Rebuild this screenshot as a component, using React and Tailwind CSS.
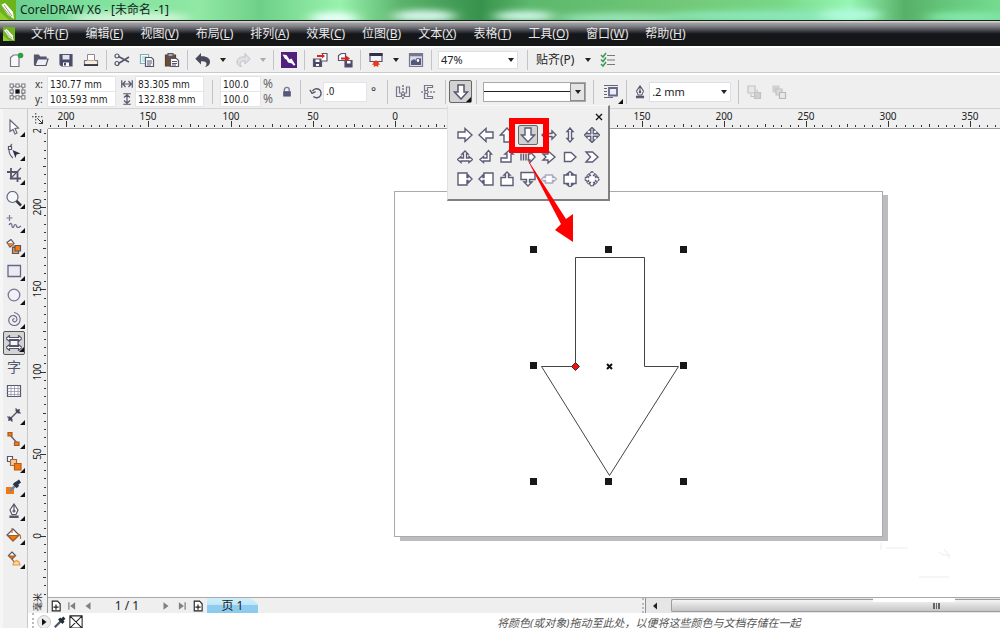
import React from 'react';

const Svg = ({ size = 'size-4', children, ...props }) => (
    <svg viewBox="0 0 16 16" fill="none" stroke="#55556b" strokeWidth="1.2" aria-hidden="true" className={`${size} shrink-0`} {...props}>
        {children}
    </svg>
);

const Logo = ({ className }) => (
    <svg viewBox="0 0 16 20" className={className} preserveAspectRatio="none" aria-hidden="true">
        <rect width="16" height="20" fill="#6db31c"/>
        <path d="M0 20V12l9 8z" fill="#8fcf2e"/>
        <path d="M1 5l4-2 8 9 1 7-6-4z" fill="#fff"/>
        <path d="M4 5l8 11M1 5l10 12" stroke="#7a8a50" strokeWidth="0.8"/>
    </svg>
);

const icons = {
    new: <><path d="M2.500 5.500l3-2.500h5.500v11.500h-8.500z" fill="#f8f8fb" stroke="#77778a"/><circle cx="12.500" cy="3.500" r="2.800" fill="#2fa03c" stroke="none"/></>,
    open: <><path d="M1.500 13V3h4l1.500 2h6v2" fill="#55556b"/><path d="M2 13.500L4.500 7H15l-2 6.500z" fill="#eef0f8"/></>,
    save: <><path d="M2 2.500h12v11.500H3.500L2 12.500z" fill="#484868"/><path d="M4.500 3h7v4.500h-7z" fill="#dfe4f0" stroke="none"/><path d="M5 10.500h6v3.500H5z" fill="#fff" stroke="none"/><path d="M6 11h2v2.500H6z" fill="#484868" stroke="none"/></>,
    print: <><path d="M4.500 8V2.500h7V8" fill="#fff" stroke="#8a8a96" strokeWidth="1"/><path d="M1.500 8.500h13v5h-13z" fill="#efeff4" stroke="#77778a"/><path d="M1 13h14" stroke="#33333f" strokeWidth="1.800"/><path d="M4 8.500h8" stroke="#e8b060"/></>,
    cut: <><path d="M4.500 4.500L15 10M4.500 11.500L15 5" strokeWidth="1.600"/><circle cx="3" cy="4" r="2"/><circle cx="3" cy="11.500" r="2"/></>,
    copy: <><path d="M1.500 2.500h8v9h-8z" fill="#fff" stroke="#8ba8b8"/><path d="M3 5h5M3 7h5M3 9h5" stroke="#8ccfc0"/><path d="M6.500 5.500h6l2 2v7h-8z" fill="#fff"/><path d="M8 9h5M8 11h5M8 13h4"/></>,
    paste: <><path d="M1.500 3h10v11h-10z" fill="#6d4c35" stroke="#5a4030"/><path d="M4 1.500h5v3H4z" fill="#a8a8b8"/><path d="M6.500 6.500h6l2 2v6h-8z" fill="#fff"/><path d="M8 9.500h5M8 11.500h5M8 13h4"/></>,
    undo: <path d="M6 1v3.200c5.500-.5 9 2 9 5.500 0 3.500-2.500 5-5 5 2.500-2 2.500-6-4-5.500v3.300L.3 6.700z" fill="#484a5c" stroke="none"/>,
    redo: <path d="M10 1.500v3.500c-5-.5-8 1.500-8 5 0 3 2.500 4.500 4.500 4.500-2-1.500-2.500-6 3.500-5.500v3L15.200 7z" fill="#e0e0e4" stroke="#b8b8c0" strokeWidth="0.800"/>,
    connect: <><path d="M0 0h16v16H0z" fill="#50207c" stroke="none"/><path d="M1.500 2.500l4 .5 3 4.500 2-1 4 6.500-2 .5-1.500-2-4-1-1.500-3-1.500-.5z" fill="#fff" stroke="none"/></>,
    import: <><path d="M1.500 7h8v7.500h-8z" fill="#484868"/><path d="M3.500 7.500h4v2.500h-4zM4 12h3v2H4z" fill="#fff" stroke="none"/><path d="M9.500 1.500h5.500V9H9.500" fill="#fff"/><path d="M5 5V3h5V1.500L13 4l-3 2.500V5z" fill="#d22" stroke="none"/></>,
    export: <><path d="M1.500 3.500l3-2h4v7h-7z" fill="#fff"/><path d="M8 8.500h7v6.500H8z" fill="#484868"/><path d="M10 9h3.500v2.500H10z" fill="#fff" stroke="none"/><path d="M4 5.500h5v-2l4 3-4 3v-2H4z" fill="#d22" stroke="none"/></>,
    publish: <><path d="M2 1.500h12v8H2z" fill="#f4f4fa"/><path d="M1.500 2.500h13" stroke="#30304a" strokeWidth="3"/><path d="M4.500 8.500l2 1.500L8 8l1.500 2 2-1.500-1 2.500 1.500 1.500-2 .5.500 2L8 14l-2.500 1 .5-2-2-.5L5.500 11z" fill="#e63a1a" stroke="none"/></>,
    launcher: <><path d="M1.500 1.500h13v13h-13z" fill="#d8dcec" stroke="#77778f"/><path d="M1.500 3h13" strokeWidth="2.500" stroke="#77778f"/><path d="M3 13V9l3-2 2 2 5-3v7z" fill="#55557a" stroke="none"/><circle cx="10" cy="8.500" r="2" fill="#fff"/></>,
    options: <><path d="M7 3.500h8M7 8h8M7 12.500h8" stroke="#77777f"/><path d="M1 3l2 2 3-4M1 7.500l2 2 3-4M1 12l2 2 3-4" stroke="#3d9a50" strokeWidth="1.500"/></>,
    rotate: <path d="M5 13.200A5.200 5.200 0 1 0 4 7M1 5.500l2.500 4L7.500 7.500" strokeWidth="1.600"/>,
    mirrorH: <><path d="M1.500 3v9.500h5V9h-2V3zM14.500 3v9.500h-5V9h2V3z" stroke="#77778a"/><path d="M8 1v15" strokeDasharray="2 1"/></>,
    mirrorV: <><path d="M4.500 1.500h8v2h-5v3h-3zM4.500 14.500h8v-2h-5v-3h-3z" stroke="#77778a"/><path d="M1 8h14" strokeDasharray="2 1"/></>,
    wrap: <><path d="M1 1.500h14M1 4.500h3M1 7.500h3M1 10.500h3M1 13.500h9" stroke="#66667a"/><path d="M6 4h8v7.500H6z" fill="#eceef6" strokeWidth="1.800" stroke="#66668a"/></>,
    pen: <><path d="M8 1l4 6-2 4.500H6L4 7zM8 2v5" fill="#fff"/><circle cx="8" cy="8" r="1"/><path d="M4 13h8v1.500H4z" fill="#55556b"/></>,
    front: <><path d="M2 2h7v7H2z" fill="#e8e8e8" stroke="#c2c2c2"/><path d="M8.500 8.500h6v6h-6z" fill="#d0d0d0" stroke="#c2c2c2"/><path d="M5 10v2.500h3M11 8V5.500" stroke="#c2c2c2"/></>,
    back: <><path d="M2 2h6v6H2z" fill="#d0d0d0" stroke="#d0d0d0"/><path d="M5 5h6v6H5z" fill="#dadada" stroke="#c2c2c2"/><path d="M8.500 8.500h6v6h-6z" fill="#e8e8e8" stroke="#b8b8b8"/></>,
    lock: <><path d="M4.500 7V5a3 3 0 0 1 6.500 0v2" stroke="#77779a" strokeWidth="1.800"/><path d="M3 7h10v7H3z" fill="#44446a" stroke="none"/><path d="M4 9.500h8M4 12h8" stroke="#8888a8" strokeWidth="0.800"/></>,
};

const tools = [
    ['选择', <path d="M4 1l8.500 8-3.500.5 2 4.500-2 1-2-4.500L4 12.500z" fill="#fff" stroke="#66667f"/>],
    ['形状', <><path d="M6 1C2 5 2 11 7 15" stroke="#66667f"/><path d="M2.500 3.500h3v3h-3z" fill="#fff"/><path d="M6.500 7l8 3.500-4 1-1 3.500z" fill="#30304a" stroke="none"/></>],
    ['裁剪', <><path d="M5 1v10.500h10M1 5h10.500v10" strokeWidth="1.800"/><path d="M4 12L15 1"/></>],
    ['缩放', <><circle cx="6.500" cy="6" r="5.500" fill="#f4f8fc" stroke="#66667f"/><path d="M10.500 10l4.500 4.500" strokeWidth="2.500" stroke="#33333f"/></>],
    ['手绘', <><path d="M3.500 0v6M.5 3h6" stroke="#7777a0"/><path d="M3 10c2-3 3-1 3 1s1.500 2 2 0 2-2 2.500 0 2 2 4.500 0" stroke="#66668a"/></>],
    ['智能填充', <><path d="M1 3.500l4-3 3 4-4 3.500z" fill="#fff"/><path d="M1.500 4H7L4 7.500z" fill="#e88030" stroke="none"/><path d="M6 6l3 3" stroke="#f08020" strokeWidth="2"/><path d="M6.500 8.500h6v6h-6z" fill="#f59a3a"/><path d="M9 6.500h5.500v5.500H9z" fill="#f07a12"/></>],
    ['矩形', <path d="M2 2.500h12.500v11H2z" fill="#eaeaf2" stroke="#66668a" strokeWidth="1.300"/>],
    ['椭圆形', <circle cx="8" cy="8" r="5.800" fill="#f0f0f6" stroke="#77779a" strokeWidth="1.300"/>],
    ['螺纹', <path d="M8.500 8c-1-1-2.500.5-1.500 2s4 1 4-2-4-4.500-6.500-2.500-2.500 6 .5 8 8 1 9-3.500S12 2 8 1.500" stroke="#66668a" strokeWidth="1.100"/>],
    ['箭头形状', <><path d="M0 3.500L3.500.500v2h9v-2L16 3.500l-3.500 3v-2h-9v2z" fill="#fff"/><path d="M0 12.500l3.500-3v2h9v-2l3.500 3-3.500 3v-2h-9v2z" fill="#fff"/><path d="M4 5.500h8v5H4z" fill="#f4f4fa"/></>],
    ['文本', null],
    ['表格', <><path d="M1.500 2.500h13v11h-13z" fill="#fff"/><path d="M1.500 5.500h13M1.500 8.500h13M1.500 11.500h13M5 2.500v11M8.500 2.500v11M12 2.500v11" stroke="#8888a4" strokeWidth="0.700"/></>],
    ['度量', <><path d="M3 13L13 3" strokeWidth="1.400"/><path d="M1.500 9.500l5 5M9.500 1.500l5 5" strokeWidth="1.400"/><path d="M2 14l1.500-5L7 12.500zM14 2L9 3.500 12.500 7z" fill="#44445a" stroke="none"/></>],
    ['连接器', <><path d="M4 4l8 9"/><path d="M2 1.500h4v3.500H2zM8.500 11H13v3.500H8.500z" fill="#f07a12" stroke="#a85a20"/></>],
    ['调和', <><path d="M1.500 1.500h5v5h-5z" fill="#fff"/><path d="M4.500 4.500h6v6h-6z" fill="#f8c89a" stroke="#a06a40"/><path d="M8.500 8.500h6.500V15H8.500z" fill="#f07a12" stroke="#b85a10"/></>],
    ['滴管', <><path d="M0 8h8v7H0z" fill="#f07a12" stroke="none"/><path d="M4 12l6-6" strokeWidth="2.500" stroke="#77889a"/><path d="M8 4l4 4M10 5l4-3" strokeWidth="3.500" stroke="#26364a"/></>],
    ['轮廓笔', icons.pen],
    ['填充', <><path d="M7 2l6 6-6 6-6-6z" fill="#fff"/><path d="M2 8.500h10.500L7 14z" fill="#f07a12" stroke="#a85a20"/><path d="M6 6V1M12 7c2 0 3 2 2.500 5" stroke="#b87030"/></>],
    ['交互式填充', <><path d="M6 1l3.500 3.500L6 8 2.500 4.500z" fill="#fff"/><path d="M3 5h6L6 8z" fill="#f07a12" stroke="#a85a20"/><path d="M6 8l2 3"/><path d="M7 14l1-3 2.500-1.500L13 11l1 3z" fill="#f8d8a0" stroke="#e89a40"/></>],
];

// tools without a flyout of their own
const plainTools = ['文本', '表格'];

const arrowShapes = [
    ['右箭头', 'M1 5h7V1.500L15 8l-7 6.500V11H1z'],
    ['左箭头', 'M15 5H8V1.500L1 8l7 6.500V11h7z'],
    ['上箭头', 'M5 15V8H1.500L8 1l6.500 7H11v7z'],
    ['下箭头', 'M5 1v7H1.500L8 15l6.500-7H11V1z'],
    ['左右箭头', 'M1 8l4-4v2.500h6V4l4 4-4 4V9.500H5V12z'],
    ['上下箭头', 'M8 1l3 3.500H9.500v7H11L8 15l-3-3.500h1.500v-7H5z'],
    ['十字箭头', 'M8 .5L10.500 3H9.200v3.800H13V5.500L15.500 8 13 10.500V9.200H9.200V13h1.300L8 15.500 5.500 13h1.300V9.200H3v1.300L.5 8 3 5.500v1.300h3.800V3H5.500z'],
    ['丁字箭头', 'M8 2l3 3H9.500v4H12V7.500l3.500 3-3.500 3V12H4v1.500l-3.500-3 3.500-3V9h2.500V5H5z'],
    ['直角双向箭头', 'M2 10.500l3.500-3V9H9V5H7.500l3-3.500 3 3.500H12v7H5.500v1.500z'],
    ['直角上箭头', 'M2 9h6V5H6l4-3.500L14 5h-2v8H2z'],
    ['虚尾箭头', 'M1 4.500v7M3.500 4.500v7M6 4.500v7M8.500 5H10V2.500L15 8l-5 5.500V11H8.500z'],
    ['燕尾箭头', 'M2 5h5V2l7 6-7 6v-3H2l3-3z'],
    ['五边形', 'M2.500 3.500H9L14 8l-5 4.500H2.500z'],
    ['V形', 'M2 3h6.500L14 8l-5.500 5H2l4.500-5z'],
    ['右箭头标注', 'M1 2h9v4.500h1V4l4 4-4 4V9.500h-1V14H1z'],
    ['左箭头标注', 'M15 2H6v4.500H5V4L1 8l4 4V9.500h1V14h9z'],
    ['上箭头标注', 'M2 14.500v-8h4.500V4H5l3-3 3 3H9.500v2.500H14v8z'],
    ['下箭头标注', 'M1 1.500v7h5.500V11H4l4 4 4-4H9.500V8.500H15v-7z'],
    ['左右箭头标注', 'M4.500 4h7v2.500h1V5.500L15.500 8l-3 2.500v-1h-1V12h-7V9.500h-1v1L.5 8l3-2.500v1h1z'],
    ['上下箭头标注', 'M2 4h4.500V3H5l3-2.500L11 3H9.500v1H14v8.500H9.500v1H11L8 16l-3-2.500h1.500v-1H2z'],
    ['十字箭头标注', 'M8 .5L11 3H9.500v1.500h2v2H13V5l2.500 3-2.500 3V9.500h-1.500v2h-2V13H11l-3 2.500L5 13h1.500v-1.500h-2v-2H3V11L.5 8 3 5v1.500h1.500v-2h2V3H5z'],
];

const menus = [
    ['文件', 'F'], ['编辑', 'E'], ['视图', 'V'], ['布局', 'L'], ['排列', 'A'], ['效果', 'C'],
    ['位图', 'B'], ['文本', 'X'], ['表格', 'T'], ['工具', 'O'], ['窗口', 'W'], ['帮助', 'H'],
];

const PX_PER_MM = 1.644;

const Caret = ({ className = 'text-[#222]' }) => (
    <span className={`w-[15px] flex justify-center shrink-0 ${className}`}>
        <svg viewBox="0 0 6 4" className="w-[6px] h-1" aria-hidden="true"><path d="M0 0h6L3 4z" fill="currentColor"/></svg>
    </span>
);

const Sep = ({ className = 'h-5' }) => (
    <span className="w-[6px] flex justify-center shrink-0"><span className={`w-px bg-[#c4c4c8] ${className}`}/></span>
);

const IconButton = ({ name, label }) => (
    <button type="button" aria-label={label} className="w-[25px] h-6 flex items-center justify-center shrink-0">
        <Svg>{icons[name]}</Svg>
    </button>
);

const Field = ({ label, value, className }) => (
    <input
        aria-label={label}
        defaultValue={value}
        className={`bg-white border border-[#e2e4ea] pl-[2px] text-[10px] leading-3 font-['DejaVu_Sans_Condensed','DejaVu_Sans',sans-serif] text-[#222] min-w-0 ${className}`}
    />
);

const Corner = ({ className }) => (
    <svg viewBox="0 0 5 5" className={`absolute size-[5px] ${className}`} aria-hidden="true"><path d="M5 0v5H0z" fill="#111"/></svg>
);

const TitleBar = () => (
    <header className="relative h-5 shrink-0 overflow-hidden bg-[#6fd88a] flex items-center">
        <svg viewBox="0 0 1000 20" preserveAspectRatio="none" className="absolute inset-0 size-full" aria-hidden="true">
            <defs>
                <linearGradient id="sky">
                    <stop offset="0" stopColor="#68cc8e"/>
                    <stop offset="0.1" stopColor="#80e29e"/>
                    <stop offset="0.2" stopColor="#90e8a4"/>
                    <stop offset="0.26" stopColor="#6ed088"/>
                    <stop offset="0.34" stopColor="#98f2ac"/>
                    <stop offset="0.4" stopColor="#5cb46c"/>
                    <stop offset="0.48" stopColor="#38924c"/>
                    <stop offset="0.53" stopColor="#5cb86c"/>
                    <stop offset="0.68" stopColor="#72c878"/>
                    <stop offset="0.78" stopColor="#78d888"/>
                    <stop offset="0.85" stopColor="#96f6b4"/>
                    <stop offset="0.905" stopColor="#58b068"/>
                    <stop offset="0.95" stopColor="#66c87c"/>
                    <stop offset="1" stopColor="#74dc90"/>
                </linearGradient>
                <filter id="soft" x="-20%" y="-100%" width="140%" height="300%"><feGaussianBlur stdDeviation="7 3"/></filter>
            </defs>
            <rect width="1000" height="20" fill="url(#sky)"/>
            <g filter="url(#soft)">
                <ellipse cx="130" cy="18" rx="60" ry="6" fill="#d2f6d8"/>
                <ellipse cx="334" cy="18" rx="24" ry="6" fill="#e8fff8"/>
                <ellipse cx="424" cy="16" rx="32" ry="6" fill="#d4f4e8"/>
                <ellipse cx="524" cy="16" rx="30" ry="5" fill="#d0f6e8"/>
                <ellipse cx="620" cy="18" rx="60" ry="5" fill="#98e4b8"/>
                <ellipse cx="770" cy="16" rx="110" ry="5" fill="#8ce8bc"/>
                <ellipse cx="850" cy="15" rx="30" ry="6" fill="#b0fadc"/>
                <ellipse cx="966" cy="17" rx="40" ry="5" fill="#84e8ac"/>
            </g>
        </svg>
        <Logo className="relative w-4 h-5"/>
        <h1 className="relative pl-1 text-[12px] leading-5 text-[#10241a] whitespace-nowrap">CorelDRAW X6 - [未命名 -1]</h1>
    </header>
);

const MenuBar = () => (
    <nav className="h-[26px] shrink-0 border-t border-[#1a221c] bg-[linear-gradient(#cfd2cf_0px,#cfd2cf_1px,#a2a2a4_2px,#85858a_5px,#4c4c54_9px,#15161a_13px,#151716_100%)] flex items-center gap-[17px] pl-[3px] overflow-hidden">
        <Logo className="w-3 h-[14px] shrink-0 -mr-px"/>
        {menus.map(([text, key]) => (
            <button key={key} type="button" className="text-[12px] leading-4 text-[#e8e8e8] whitespace-nowrap shrink-0">
                {text}(<u>{key}</u>)
            </button>
        ))}
    </nav>
);

const StandardBar = () => (
    <div role="toolbar" aria-label="标准" className="h-[27px] shrink-0 bg-[#efefef] border-t-2 border-t-white border-b border-b-[#cacaca] flex items-center pl-[3px] overflow-hidden">
        <IconButton name="new" label="新建"/>
        <IconButton name="open" label="打开"/>
        <IconButton name="save" label="保存"/>
        <IconButton name="print" label="打印"/>
        <Sep/>
        <IconButton name="cut" label="剪切"/>
        <IconButton name="copy" label="复制"/>
        <IconButton name="paste" label="粘贴"/>
        <Sep/>
        <IconButton name="undo" label="撤消"/>
        <Caret/>
        <IconButton name="redo" label="重做"/>
        <Caret className="text-[#aaa]"/>
        <Sep/>
        <IconButton name="connect" label="搜索内容"/>
        <Sep/>
        <IconButton name="import" label="导入"/>
        <IconButton name="export" label="导出"/>
        <Sep/>
        <IconButton name="publish" label="发布为 PDF"/>
        <Caret/>
        <IconButton name="launcher" label="应用程序启动器"/>
        <Sep/>
        <div className="relative w-20 ml-1 shrink-0">
            <select aria-label="缩放级别" className="block appearance-none w-full h-[18px] bg-white border border-[#dcdee6] pl-[2px] text-[11px] leading-4 text-[#222]">
                <option>47%</option>
            </select>
            <Caret className="absolute right-0 top-[7px] text-[#222] pointer-events-none"/>
        </div>
        <span className="ml-[6px]"><Sep/></span>
        <button type="button" className="flex items-center ml-[6px] text-[12px] leading-4 text-[#222] whitespace-nowrap">
            贴齐(P)
            <span className="ml-[6px]"><Caret/></span>
        </button>
        <IconButton name="options" label="选项"/>
    </div>
);

const ArrowPicker = () => (
    <div role="dialog" aria-label="完美形状" className="absolute z-10 top-full -left-px w-[163px] h-24 bg-[#efefef] border border-t-[#f8f8f8] border-l-[#e0e0e0] border-r-2 border-b-2 border-r-[#808084] border-b-[#808084]">
        <div className="h-[18px] flex items-end justify-end pr-[2px]">
            <button type="button" aria-label="关闭" className="size-[14px] flex items-center justify-center">
                <Svg size="size-2" stroke="#111" strokeWidth="2.600"><path d="M2 2l12 12M14 2L2 14"/></Svg>
            </button>
        </div>
        <div className="grid grid-cols-7 auto-rows-[22px] px-[6px]">
            {arrowShapes.map(([label, d]) => (
                <button key={label} type="button" aria-label={label} className="flex items-center justify-center">
                    <span className={label === '下箭头' ? 'size-5 rounded-xs border border-[#666] bg-[#d2d2d2] flex items-center justify-center shrink-0' : ''}>
                        <Svg stroke={label === '左右箭头标注' ? '#a8acc0' : '#5c5c78'} strokeWidth="1.400">
                            <path d={d} fill="#fff" strokeDasharray={label === '十字箭头标注' ? '2 1' : undefined}/>
                        </Svg>
                    </span>
                </button>
            ))}
        </div>
        <span className="absolute left-[61px] top-[12px] w-10 h-[35px] border-[6px] border-[#fe0000]"/>
        <svg viewBox="0 0 60 96" className="absolute left-[76px] top-12 w-[60px] h-24 pointer-events-none" aria-hidden="true">
            <path d="M2 3l40 62 7-5v28L31 76l6-6z" fill="#fe0000"/>
        </svg>
    </div>
);

const PropertyBar = () => (
    <div role="toolbar" aria-label="属性栏" className="h-9 shrink-0 bg-[#efefef] border-t-2 border-t-white border-b border-b-[#d2d2d2] flex items-center pl-[9px] text-[#333]">
        <Svg size="size-[17px]" stroke="#77777f" strokeWidth="1">
            <path d="M3 3h10v10H3z"/>
            <path d="M1 1h3v3H1zM6.500 1h3v3h-3zM12 1h3v3h-3zM1 6.500h3v3H1zM12 6.500h3v3h-3zM1 12h3v3H1zM6.500 12h3v3h-3zM12 12h3v3h-3z" fill="#fff"/>
            <path d="M6 6h4v4H6z" fill="#111" stroke="none"/>
        </Svg>
        <div className="grid grid-cols-[12px_69px] auto-rows-[15px] items-center ml-[9px] shrink-0 text-[10px] leading-3">
            <span>x:</span><Field label="x" value="130.77 mm" className="h-4 w-full"/>
            <span>y:</span><Field label="y" value="103.593 mm" className="h-4 w-full"/>
        </div>
        <div className="grid grid-cols-[14px_69px] auto-rows-[15px] items-center ml-[5px] shrink-0">
            <Svg size="size-3" strokeWidth="1.600"><path d="M1 3v10M15 3v10M2 8h12M6 4L2.500 8 6 12M10 4l3.500 4L10 12"/></Svg>
            <Field label="宽度" value="83.305 mm" className="h-4 w-full"/>
            <Svg size="size-3" strokeWidth="1.600"><path d="M3 1h10M3 15h10M8 2v12M4 6l4-3.500L12 6M4 10l4 3.500 4-3.500"/></Svg>
            <Field label="高度" value="132.838 mm" className="h-4 w-full"/>
        </div>
        <span className="ml-[5px]"><Sep className="h-6"/></span>
        <div className="grid grid-cols-[41px_10px] auto-rows-[15px] items-center gap-x-[2px] ml-[5px] shrink-0 text-[12px] leading-3 text-[#666]">
            <Field label="水平缩放" value="100.0" className="h-4 w-full"/><span>%</span>
            <Field label="垂直缩放" value="100.0" className="h-4 w-full"/><span>%</span>
        </div>
        <button type="button" aria-label="锁定比率" className="ml-2 shrink-0"><Svg size="size-3">{icons.lock}</Svg></button>
        <span className="ml-1"><Sep className="h-6"/></span>
        <span className="ml-[6px]"><Svg size="size-[14px]">{icons.rotate}</Svg></span>
        <Field label="旋转角度" value=".0" className="h-5 w-[44px] shrink-0"/>
        <span className="ml-1 text-[12px] leading-5">°</span>
        <span className="ml-2"><Sep className="h-6"/></span>
        <IconButton name="mirrorH" label="水平镜像"/>
        <IconButton name="mirrorV" label="垂直镜像"/>
        <span className="ml-[2px]"><Sep className="h-6"/></span>
        <div className="relative h-[27px] flex items-center px-[1px] shrink-0">
            <button type="button" aria-label="完美形状" className="relative w-[23px] h-[23px] rounded-xs border border-[#666] bg-[#d2d2d2] flex items-center justify-center">
                <Svg strokeWidth="1.500"><path d={arrowShapes[3][1]} fill="#fff"/></Svg>
                <Corner className="right-0 bottom-0"/>
            </button>
            <ArrowPicker/>
        </div>
        <Sep className="h-6"/>
        <button type="button" aria-label="轮廓样式" className="ml-1 w-[103px] h-5 shrink-0 bg-white border border-[#a8a8ac] flex items-center">
            <span className="flex-1 h-px bg-[#222]"/>
            <span className="w-[15px] h-full border border-[#8a8a8e] bg-[#e4e4e4] flex justify-center items-center text-[#111]"><Caret/></span>
        </button>
        <span className="ml-1"><Sep className="h-6"/></span>
        <span className="relative ml-[2px]">
            <IconButton name="wrap" label="文本换行"/>
            <Corner className="right-0 bottom-0"/>
        </span>
        <span className="mr-1"><Sep className="h-6"/></span>
        <span><Svg size="size-[14px]">{icons.pen}</Svg></span>
        <div className="relative w-[82px] ml-[2px] shrink-0">
            <select aria-label="轮廓宽度" className="block appearance-none w-full h-5 bg-white border border-[#dcdee6] pl-[2px] text-[11px] leading-4 text-[#222]">
                <option>.2 mm</option>
            </select>
            <Caret className="absolute right-0 top-2 text-[#222] pointer-events-none"/>
        </div>
        <span className="ml-1"><Sep className="h-6"/></span>
        <IconButton name="front" label="到图层前面"/>
        <IconButton name="back" label="到图层后面"/>
    </div>
);

const Toolbox = () => (
    <aside className="w-7 shrink-0 bg-[#efefef] border-l-[3px] border-l-[#f6f6f6] border-r border-r-[#c8c8c8] pt-[6px] flex flex-col items-start">
        {tools.map(([label, drawing]) => (
            <button
                key={label}
                type="button"
                aria-label={label}
                className={label === '箭头形状'
                    ? 'relative h-6 w-[22px] shrink-0 flex items-center justify-center rounded-xs border border-[#555] bg-[#d4d4d4]'
                    : 'relative h-6 w-[22px] shrink-0 flex items-center justify-center'}
            >
                {drawing ? <Svg>{drawing}</Svg> : <span className="text-[14px] leading-5 text-[#55556b]">字</span>}
                {!plainTools.includes(label) && <Corner className="right-0 bottom-[2px]"/>}
            </button>
        ))}
    </aside>
);

const ticks = (from, to) => Array.from({ length: (to - from) / 5 + 1 }, (_, i) => from + i * 5);

const tickLength = (mm) => {
    if (mm % 50 === 0) return 6;
    return mm % 25 === 0 ? 3 : 2;
};

const HorizontalRuler = () => (
    <svg className="flex-1 min-w-0 h-5 bg-[#efefef]" aria-hidden="true">
        {ticks(-210, 365).map((mm) => {
            const x = Math.round(347 + mm * PX_PER_MM);
            const len = tickLength(mm);
            return (
                <g key={mm}>
                    <rect x={x} y={18 - len} width="1" height={len} fill="#333"/>
                    {mm % 50 === 0 && <text x={x} y="11" textAnchor="middle" fontSize="10" fill="#222">{Math.abs(mm)}</text>}
                </g>
            );
        })}
        <rect y="19" width="100%" height="1" fill="#9a9a9a"/>
    </svg>
);

const VerticalRuler = () => (
    <svg className="w-5 shrink-0 h-full bg-[#efefef] overflow-hidden" aria-hidden="true">
        {ticks(-35, 250).map((mm) => {
            const y = Math.round(407 - mm * PX_PER_MM);
            const len = tickLength(mm);
            return (
                <g key={mm}>
                    <rect x={18 - len} y={y} width={len} height="1" fill="#333"/>
                    {mm % 50 === 0 && <text transform={`translate(13 ${y}) rotate(-90)`} textAnchor="middle" fontSize="10" fill="#222">{mm}</text>}
                </g>
            );
        })}
        <text transform="translate(13 473) rotate(-90)" textAnchor="middle" fontSize="9" fill="#222">毫米</text>
        <rect x="19" width="1" height="100%" fill="#9a9a9a"/>
    </svg>
);

const Handle = ({ x, y }) => <rect x={x - 3} y={y - 3} width="7" height="7" fill="#161819"/>;

const Drawing = () => (
    <svg className="absolute inset-0 size-full" role="img" aria-label="下箭头">
        <g shapeRendering="crispEdges">
            <path d="M352 66h488v346H352z" fill="#bcbcbe"/>
            <path d="M346 62h489v346H346z" fill="#aaaaae"/>
            <path d="M347 63h487v344H347z" fill="#fff"/>
        </g>
        <path d="M527.500 237.500V128.500h69v109h34l-69 109-68-109z" fill="#fff" stroke="#444" strokeWidth="1"/>
        {[120, 236, 352].map(y => [485, 560, 635].map(x => (
            (x !== 560 || y !== 236) && <Handle key={`${x}-${y}`} x={x} y={y}/>
        )))}
        <path d="M559 235l5 5M564 235l-5 5" stroke="#111" strokeWidth="2"/>
        <path d="M527.500 233.500l4 4-4 4-4-4z" fill="#f01010" stroke="#333" strokeWidth="1"/>
        <g stroke="#ececec" fill="none">
            <path d="M833 414v7M838 419h22M891 423l4 3h6M896 420l5 6v4M871 448h30"/>
        </g>
    </svg>
);

const navIcons = {
    add: <><path d="M3 1.500h7l3.500 3.500v9.500H3z" fill="#fff" stroke="#222" strokeWidth="1.500"/><path d="M8 6v7M4.500 9.500h7" stroke="#222" strokeWidth="1.600"/></>,
    first: <><path d="M13 2v12L5 8z" fill="#808084" stroke="none"/><path d="M3 2v12" stroke="#808084" strokeWidth="2"/></>,
    prev: <path d="M12 2v12L4 8z" fill="#808084" stroke="none"/>,
    next: <path d="M4 2v12l8-6z" fill="#808084" stroke="none"/>,
    last: <><path d="M3 2v12l8-6z" fill="#808084" stroke="none"/><path d="M13 2v12" stroke="#808084" strokeWidth="2"/></>,
};

const NavButton = ({ name, label }) => (
    <button type="button" aria-label={label} className="w-4 shrink-0 flex justify-center">
        <Svg size={name === 'add' ? 'size-3' : 'size-[10px]'}>{navIcons[name]}</Svg>
    </button>
);

const PageNav = () => (
    <footer className="h-4 shrink-0 flex bg-[#efefef] border-t border-[#a8a8aa]">
        <div className="flex-[598] min-w-0 flex items-center overflow-hidden">
            <NavButton name="add" label="添加页"/>
            <NavButton name="first" label="首页"/>
            <NavButton name="prev" label="上一页"/>
            <span className="w-[62px] shrink-0 text-center text-[12px] leading-[14px] text-[#222]">1 / 1</span>
            <NavButton name="next" label="下一页"/>
            <NavButton name="last" label="末页"/>
            <NavButton name="add" label="添加页"/>
            <button type="button" className="w-[51px] h-full ml-px shrink-0 text-[12px] leading-[14px] text-[#222] bg-[linear-gradient(#d2effb_0%,#bfe6f8_45%,#8fcdf0_50%,#8ccaee_100%)] [clip-path:polygon(0_0,86%_0,100%_40%,100%_100%,0_100%)]">页 1</button>
            <span className="ml-auto h-full border-r border-[#909094] w-1 border-l-2 border-l-[#bbb] [border-left-style:dotted]"/>
        </div>
        <div className="flex-[354] min-w-0 flex items-center bg-[#e6e6e6]">
            <span className="w-[25px] shrink-0 flex justify-center pr-2"><Svg size="size-2"><path d="M12 1v14L4 8z" fill="#222" stroke="none"/></Svg></span>
            <div className="relative flex-1 h-[13px] border border-r-0 border-[#9c9ca0] rounded-l-xs bg-[linear-gradient(#f4f4f4,#dcdcdc_50%,#c6c6c8)]">
                <span className="absolute left-[261px] top-[3px] w-[7px] h-[6px] border-x-2 border-[#666] flex justify-center"><span className="w-px bg-[#666]"/></span>
                <span className="absolute left-[201px] -top-[2px] w-[82px] h-1 bg-white"/>
            </div>
        </div>
    </footer>
);

const DocumentPalette = () => (
    <div className="h-[15px] shrink-0 bg-white flex items-start pl-1 overflow-hidden">
        <span className="w-1 h-full shrink-0 border-l-2 border-dotted border-[#bbb]"/>
        <button type="button" aria-label="菜单" className="size-[14px] shrink-0 ml-[1px] mt-[2px] rounded-full border border-[#ccc] bg-[#ececec] flex items-center justify-center">
            <Svg size="size-2"><path d="M4 1v14l9-7z" fill="#111" stroke="none"/></Svg>
        </button>
        <button type="button" aria-label="滴管" className="shrink-0 mt-[2px] ml-[2px]">
            <Svg size="size-[14px]"><path d="M2 14l7-7" strokeWidth="2.500"/><path d="M7 4l5 5M10 6l3-3" strokeWidth="3.500" stroke="#222c38"/></Svg>
        </button>
        <button type="button" aria-label="无填充" className="shrink-0 mt-[2px] ml-[2px]">
            <Svg size="size-[14px]" stroke="#222"><path d="M1 1h14v14H1zM1 1l14 14M15 1L1 15" fill="#fff"/></Svg>
        </button>
        <p className="flex-1 min-w-0 pl-[414px] pt-[1px] text-[11px] leading-[18px] italic text-[#555] whitespace-nowrap">将颜色(或对象)拖动至此处，以便将这些颜色与文档存储在一起</p>
    </div>
);

const App = () => (
    <div className="h-screen flex flex-col overflow-hidden bg-white font-['Noto_Sans','Noto_Sans_CJK_SC',sans-serif] text-[#222]">
        <TitleBar/>
        <MenuBar/>
        <StandardBar/>
        <PropertyBar/>
        <div className="flex-1 min-h-0 flex">
            <Toolbox/>
            <div className="flex-1 min-w-0 flex flex-col">
                <div className="flex shrink-0">
                    <div className="w-5 h-5 shrink-0 bg-[#efefef] flex items-center justify-center">
                        <Svg size="size-3" stroke="#222"><path d="M5 0v16M0 5h16" strokeDasharray="2 2"/><path d="M7 7l7 7M14 9v5H9"/></Svg>
                    </div>
                    <HorizontalRuler/>
                </div>
                <div className="flex-1 min-h-0 flex">
                    <VerticalRuler/>
                    <div className="flex-1 min-w-0 flex flex-col">
                        <main className="relative flex-1 min-h-0 bg-white">
                            <Drawing/>
                        </main>
                        <PageNav/>
                    </div>
                </div>
                <DocumentPalette/>
            </div>
        </div>
    </div>
);

export default App;
